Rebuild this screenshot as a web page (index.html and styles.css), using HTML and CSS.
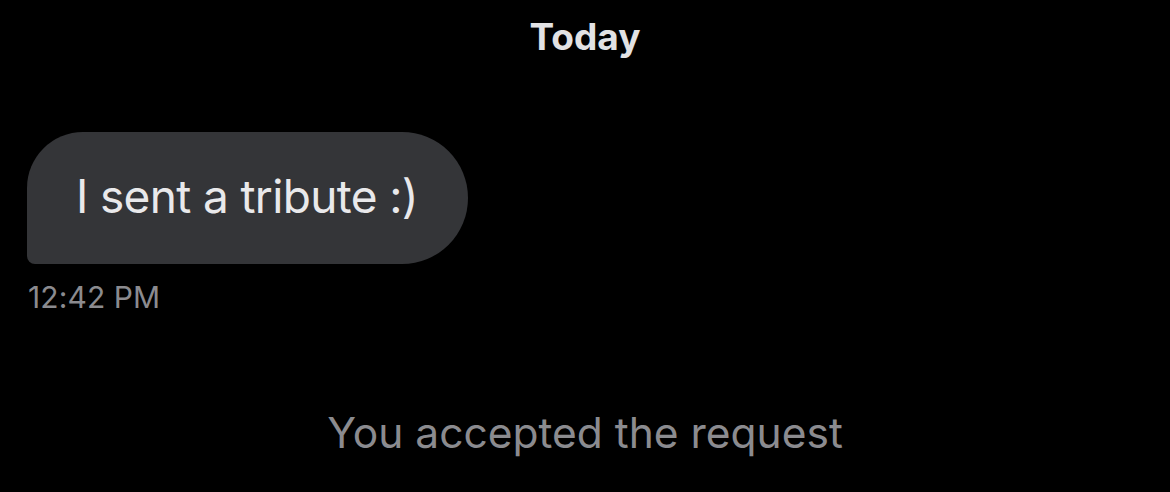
FILE: index.html
```html
<!DOCTYPE html>
<html>
<head>
<meta charset="utf-8">
<link rel="stylesheet" href="styles.css">
</head>
<body>
<div class="chat">
  <div class="day">Today</div>
  <div class="msg">
    <div class="bubble">I sent a tribute :)</div>
    <div class="time">12:42 PM</div>
  </div>
  <div class="notice">You accepted the request</div>
</div>
</body>
</html>
```
FILE: styles.css
```css
html, body {
  margin: 0;
  background: #000;
}
body {
  width: 1170px;
  height: 492px;
  overflow: hidden;
  font-family: Inter, "Noto Sans", sans-serif;
}
.chat {
  display: flex;
  flex-direction: column;
}
.day {
  text-align: center;
  color: #e2e2e4;
  font-weight: 700;
  font-size: 37px;
  line-height: 44px;
  padding-top: 15px;
}
.msg {
  display: flex;
  flex-direction: column;
  align-items: flex-start;
  padding-left: 27px;
  margin-top: 73px;
}
.bubble {
  background: #343538;
  color: #e9e9eb;
  font-size: 46px;
  line-height: 58px;
  padding: 35px 50px 39px 49px;
  border-radius: 56px 66px 66px 8px;
  letter-spacing: -0.65px;
}
.time {
  color: #8b8b8f;
  font-size: 30px;
  line-height: 36px;
  margin-top: 15px;
  padding-left: 1px;
  letter-spacing: 0.1px;
}
.notice {
  text-align: center;
  color: #8b8b8f;
  font-size: 42.5px;
  line-height: 52px;
  margin-top: 92px;
}
```
